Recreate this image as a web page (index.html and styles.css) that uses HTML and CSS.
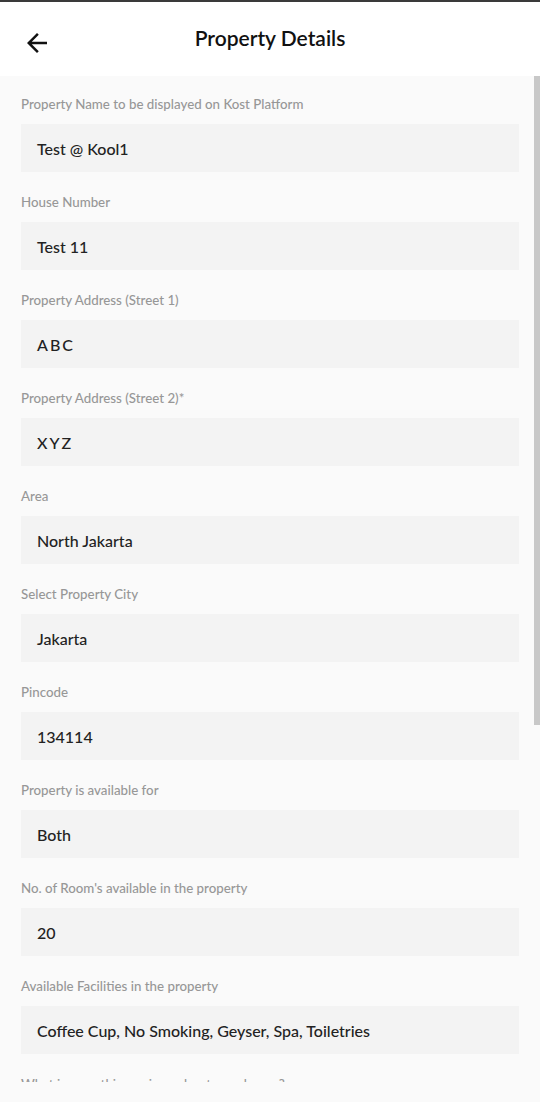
FILE: index.html
```html
<!DOCTYPE html>
<html lang="en">
<head>
  <meta charset="UTF-8" />
  <meta name="viewport" content="width=device-width, initial-scale=1.0"/>
  <title>Property Details</title>
  <link rel="stylesheet" href="styles.css">
</head>
<body>
  <header class="topbar">
    <button class="back" aria-label="Back">
      <svg viewBox="0 0 24 24" width="30" height="30"><path d="M20 11H7.83l5.59-5.59L12 4l-8 8 8 8 1.41-1.41L7.83 13H20v-2z" fill="#111"/></svg>
    </button>
    <h1>Property Details</h1>
  </header>

  <main class="content">
    <div class="scroll-thumb"></div>

    <div class="field">
      <label>Property Name to be displayed on Kost Platform</label>
      <div class="value">Test @ Kool1</div>
    </div>
    <div class="field">
      <label>House Number</label>
      <div class="value">Test 11</div>
    </div>
    <div class="field">
      <label>Property Address (Street 1)</label>
      <div class="value spaced">ABC</div>
    </div>
    <div class="field">
      <label>Property Address (Street 2)*</label>
      <div class="value spaced">XYZ</div>
    </div>
    <div class="field">
      <label>Area</label>
      <div class="value">North Jakarta</div>
    </div>
    <div class="field">
      <label>Select Property City</label>
      <div class="value">Jakarta</div>
    </div>
    <div class="field">
      <label>Pincode</label>
      <div class="value">134114</div>
    </div>
    <div class="field">
      <label>Property is available for</label>
      <div class="value">Both</div>
    </div>
    <div class="field">
      <label>No. of Room's available in the property</label>
      <div class="value">20</div>
    </div>
    <div class="field">
      <label>Available Facilities in the property</label>
      <div class="value">Coffee Cup, No Smoking, Geyser, Spa, Toiletries</div>
    </div>
    <div class="field">
      <label>What is something unique about your house?</label>
      <div class="value">&nbsp;</div>
    </div>
  </main>
</body>
</html>
```

FILE: styles.css
```css
* {
  box-sizing: border-box;
  margin: 0;
  padding: 0;
}

body {
  background: #fafafa;
  font-family: 'Lato', 'Open Sans', sans-serif;
  color: #222;
}

.topbar {
  position: relative;
  height: 76px;
  background: #ffffff;
  border-top: 2px solid #3a3a3a;
  display: flex;
  align-items: center;
  justify-content: center;
}

.back {
  position: absolute;
  left: 22px;
  top: 26px;
  width: 30px;
  height: 30px;
  border: none;
  background: none;
  display: flex;
}

.topbar h1 {
  font-size: 21px;
  font-weight: 600;
  color: #111;
  margin-top: -3px;
  padding-bottom: 1px;
}

.content {
  position: relative;
  height: 1006px;
  overflow: hidden;
  padding: 20px 21px 0 21px;
}

.scroll-thumb {
  position: absolute;
  right: 0;
  top: 0;
  width: 6px;
  height: 649px;
  background: #c8c8c8;
}

.field {
  margin-bottom: 22px;
}

.field label {
  display: block;
  font-size: 13.3px;
  font-weight: 500;
  line-height: 16px;
  color: #979797;
  margin-bottom: 12px;
}

.value {
  height: 48px;
  background: #f3f3f3;
  padding: 0 16px;
  display: flex;
  align-items: center;
  font-size: 16px;
  font-weight: 500;
  color: #222;
}

.value.spaced {
  letter-spacing: 2px;
}
```
